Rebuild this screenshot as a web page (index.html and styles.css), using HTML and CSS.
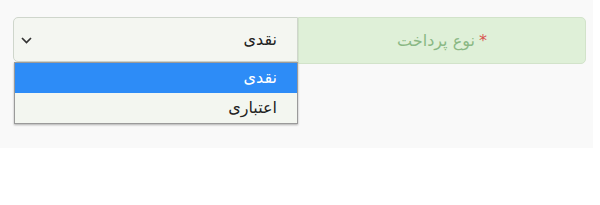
FILE: index.html
```html
<!DOCTYPE html>
<html lang="fa" dir="rtl">
<head>
  <meta charset="UTF-8" />
  <title>نوع پرداخت</title>
  <link rel="stylesheet" href="styles.css">
</head>
<body>
  <div class="panel">
    <div class="input-group">
      <label class="addon"><span class="req">*</span> نوع پرداخت</label>
      <div class="select-wrap">
        <div class="select">
          <span class="value">نقدی</span>
          <svg class="chevron" width="11" height="7" viewBox="0 0 11 7">
            <path d="M1 1 L5.5 5.5 L10 1" fill="none" stroke="#333" stroke-width="1.7" />
          </svg>
        </div>
        <ul class="options">
          <li class="selected">نقدی</li>
          <li>اعتباری</li>
        </ul>
      </div>
    </div>
  </div>
</body>
</html>
```

FILE: styles.css
```css
* {
  box-sizing: border-box;
}

body {
  margin: 0;
  background: #fff;
  font-family: 'DejaVu Sans', sans-serif;
}

.panel {
  width: 593px;
  height: 148px;
  margin-right: auto;
  margin-left: 0;
  background: #f9f9f9;
  padding: 17px 7px 0 13px;
}

.input-group {
  display: flex;
  height: 47px;
}

.addon {
  width: 288px;
  background: #dff0d8;
  border: 1px solid #d2e3ca;
  border-radius: 0 5px 5px 0;
  color: #8ab884;
  font-size: 16px;
  display: flex;
  align-items: center;
  justify-content: center;
}

.req {
  color: #d9534f;
  margin-left: 4px;
}

.select-wrap {
  position: relative;
  width: 285px;
}

.select {
  height: 45px;
  background: #f4f6f1;
  border: 1px solid #cfd6cc;
  border-radius: 5px 0 0 5px;
  display: flex;
  align-items: center;
  justify-content: space-between;
  padding: 0 20px 0 7px;
  font-size: 16px;
  color: #222;
}

.chevron {
  margin-top: 1px;
}

.options {
  position: absolute;
  top: 45px;
  left: 1px;
  width: 284px;
  margin: 0;
  padding: 0;
  list-style: none;
  background: #f3f6f0;
  border: 1px solid #9a9a9a;
  box-shadow: 0 1px 2px rgba(0,0,0,0.3);
  font-size: 16px;
  color: #222;
}

.options li {
  height: 30px;
  line-height: 30px;
  padding-right: 20px;
}

.options li.selected {
  background: #2d8cf7;
  color: #fff;
}
```
